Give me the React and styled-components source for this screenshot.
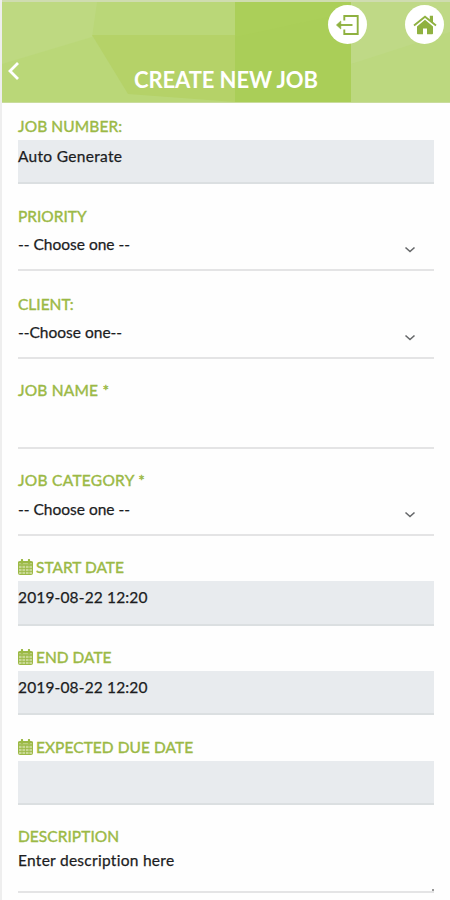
import React from 'react'
import styled, {createGlobalStyle} from 'styled-components'

const GlobalStyle = createGlobalStyle`
* {
  box-sizing: border-box;
}
body {
  margin: 0;
  background-color: #fefefe;
  font-family: Lato, 'Open Sans', sans-serif;
}
`
const Page = styled.div`
height: 900px;
overflow: hidden;
border-left: 2px solid #eeeeee;
`
const HeaderBar = styled.header`
position: relative;
display: flex;
flex-direction: column;
height: 103px;
padding-top: 5px;
border-top: 2px solid #cfdcb0;
border-bottom: 1px solid #c9dc9c;
background-color: #bad778;
`
const HeaderArt = styled.svg`
position: absolute;
top: 0;
left: 0;
width: 100%;
height: 100%;
`
const HeaderActions = styled.div`
position: relative;
display: flex;
justify-content: flex-end;
gap: 38px;
height: 39px;
padding-right: 6px;
`
const RoundButton = styled.button`
display: flex;
align-items: center;
justify-content: center;
width: 39px;
height: 39px;
margin-top: -2px;
padding: 0;
border: none;
border-radius: 50%;
background-color: white;
color: #8fb140;
cursor: pointer;
`
const TitleRow = styled.div`
position: relative;
display: flex;
align-items: center;
height: 54px;
padding-left: 4px;
`
const BackButton = styled.button`
display: flex;
width: 14px;
padding: 0;
margin-top: -5px;
border: none;
background: none;
cursor: pointer;
`
const Title = styled.h1`
flex: 1;
margin: 14px 18px 0 0;
text-align: center;
font-size: 22px;
line-height: 28px;
letter-spacing: -0.1px;
font-weight: bold;
color: white;
`
const Form = styled.form`
padding: 0 16px;
`
const Field = styled.div`
padding-top: ${props => props.$gap}px;
`
const Label = styled.label`
display: flex;
height: ${props => props.$height || 27}px;
font-size: 15.5px;
line-height: 26px;
letter-spacing: ${props => props.$spacing || 0}px;
white-space: nowrap;
color: #9bb945;
-webkit-text-stroke: 0.4px #9bb945;
`
const CalendarIcon = styled.svg`
width: 15px;
height: 16px;
margin: 5px 3px 0 0;
`
const Control = styled.div`
display: flex;
justify-content: space-between;
height: ${props => props.$height}px;
padding-top: ${props => props.$top === undefined ? 6 : props.$top}px;
border-bottom: 2px solid ${props => props.$filled ? '#dbdfe1' : '#e4e4e5'};
background-color: ${props => props.$filled ? '#e8ebee' : 'transparent'};
`
const Value = styled.span`
font-size: 15.5px;
line-height: 20px;
letter-spacing: ${props => props.$spacing || 0}px;
font-variant-ligatures: none;
white-space: nowrap;
color: #1c1d1f;
-webkit-text-stroke: 0.25px #1c1d1f;
`
const Chevron = styled.svg`
width: 12px;
height: 8px;
margin: 12px 18px 0 0;
`
const ResizeGrip = styled.span`
align-self: flex-end;
width: 2px;
height: 2px;
background-color: #999;
`

const fields = [
    {label: 'JOB NUMBER:', value: 'Auto Generate', gap: 10, height: 44, filled: true, spacing: 0.1, valueSpacing: 0.3},
    {label: 'PRIORITY', value: '-- Choose one --', gap: 19, height: 42, top: 5, labelHeight: 26, select: true},
    {label: 'CLIENT:', value: '--Choose one--', gap: 20, height: 42, top: 5, labelHeight: 26, select: true},
    {label: 'JOB NAME *', value: '', gap: 18, height: 45, spacing: 0.2},
    {label: 'JOB CATEGORY *', value: '-- Choose one --', gap: 18, height: 42, top: 5, spacing: 0.28, select: true},
    {label: 'START DATE', value: '2019-08-22 12:20', gap: 18, height: 45, filled: true, date: true, valueSpacing: 0.15},
    {label: 'END DATE', value: '2019-08-22 12:20', gap: 18, height: 44, filled: true, date: true, valueSpacing: 0.15},
    {label: 'EXPECTED DUE DATE', value: '', gap: 19, height: 44, filled: true, date: true, spacing: 0.05},
    {label: 'DESCRIPTION', value: 'Enter description here', gap: 18, height: 43, top: 0, spacing: 0.05, valueSpacing: 0.28, grip: true},
]

const Calendar = () => (
    <CalendarIcon viewBox="0 0 15 16" fill="none">
        <rect x="0.5" y="2.5" width="14" height="13" rx="1" fill="#c8d894" stroke="#9bb945" />
        <path d="M0 3.5H15M0 6H15" stroke="#9bb945" strokeWidth="1.4" />
        <path d="M4 6V16M7.5 6V16M11 6V16M0 9.5H15M0 12.5H15" stroke="#9bb945" strokeWidth="0.8" />
        <path d="M4 1V4M11 1V4" stroke="#9bb945" strokeWidth="2.2" strokeLinecap="round" />
    </CalendarIcon>
)

const Header = () => (
    <HeaderBar>
        <HeaderArt viewBox="0 0 448 100" preserveAspectRatio="none">
            <polygon points="0,0 95,0 90,35 0,62" fill="#bed981" />
            <polygon points="90,33 233,33 233,100 126,92" fill="#b5d268" />
            <polygon points="233,0 349,0 349,100 233,100" fill="#abcf59" />
            <polygon points="233,35 349,10 349,100 233,100" fill="#aace58" />
            <polygon points="349,0 448,0 448,38 349,62" fill="#bfd986" />
            <polygon points="349,62 448,30 448,100 349,100" fill="#bcd87f" />
        </HeaderArt>
        <HeaderActions>
            <RoundButton type="button" aria-label="Log out">
                <svg width="26" height="22" viewBox="0 0 26 22" fill="none" stroke="currentColor" strokeWidth="1.9">
                    <path d="M9.3 6.5V2H22.7V20H9.3V15.5" />
                    <path d="M17.5 11H4" />
                    <path d="M5.8 7L1.4 11L5.8 15Z" fill="currentColor" strokeWidth="0.6" />
                </svg>
            </RoundButton>
            <RoundButton type="button" aria-label="Home">
                <svg width="24" height="20" viewBox="0 0 24 20">
                    <path d="M16.8 0.8H20V8L16.8 5Z" fill="currentColor" />
                    <path d="M12 4.8L20 11.4V18.5Q20 19.3 19.2 19.3H14V13.6H10V19.3H4.8Q4 19.3 4 18.5V11.4Z" fill="currentColor" />
                    <path d="M1 10.6L12 1.8L23 10.6" fill="none" stroke="currentColor" strokeWidth="1.9" />
                </svg>
            </RoundButton>
        </HeaderActions>
        <TitleRow>
            <BackButton type="button" aria-label="Back">
                <svg width="14" height="20" viewBox="0 0 14 20" fill="none" stroke="white" strokeWidth="2.8">
                    <path d="M12 2L4 10L12 18" />
                </svg>
            </BackButton>
            <Title>CREATE NEW JOB</Title>
        </TitleRow>
    </HeaderBar>
)

const App = () => {
    return (
        <Page>
            <GlobalStyle />
            <Header />
            <Form>
                {fields.map(f => (
                    <Field key={f.label} $gap={f.gap}>
                        <Label $height={f.labelHeight} $spacing={f.spacing}>
                            {f.date && <Calendar />}
                            {f.label}
                        </Label>
                        <Control $height={f.height} $top={f.top} $filled={f.filled}>
                            <Value $spacing={f.valueSpacing}>{f.value}</Value>
                            {f.select && (
                                <Chevron viewBox="0 0 12 8" fill="none" stroke="#66686a" strokeWidth="1.6">
                                    <path d="M1.5 1.5L6 5.5L10.5 1.5" />
                                </Chevron>
                            )}
                            {f.grip && <ResizeGrip />}
                        </Control>
                    </Field>
                ))}
            </Form>
        </Page>
    )
}
export default App;
